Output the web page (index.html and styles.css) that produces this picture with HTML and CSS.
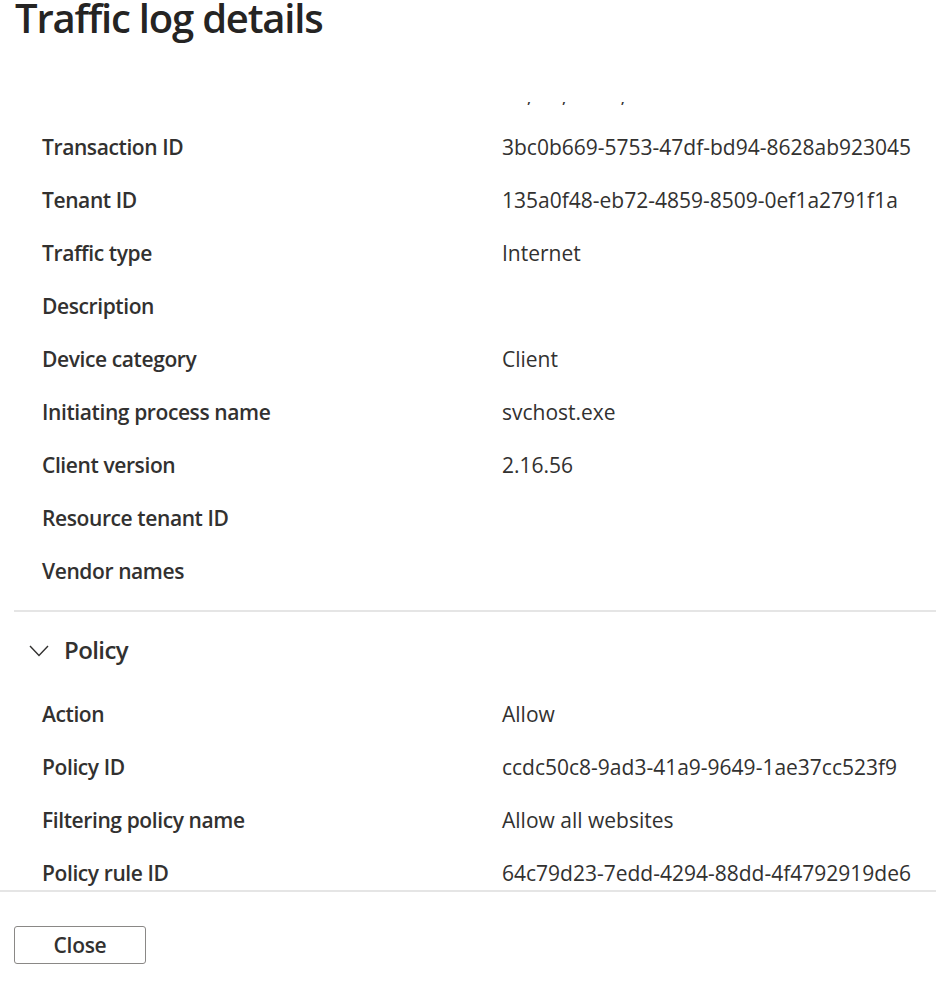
FILE: index.html
```html
<!DOCTYPE html>
<html lang="en">
<head>
<meta charset="utf-8">
<title>Traffic log details</title>
<link rel="stylesheet" href="styles.css">
</head>
<body>
<div class="panel">
  <header class="header">
    <h1 class="title">Traffic log details</h1>
  </header>
  <div class="scroll">
    <div class="scroll-inner">
      <div class="section">
        <div class="row"><div class="label">Date</div><div class="value">Fri, 10, 2024, 10:21:36 AM</div></div>
        <div class="row"><div class="label">Transaction ID</div><div class="value">3bc0b669-5753-47df-bd94-8628ab923045</div></div>
        <div class="row"><div class="label">Tenant ID</div><div class="value">135a0f48-eb72-4859-8509-0ef1a2791f1a</div></div>
        <div class="row"><div class="label">Traffic type</div><div class="value">Internet</div></div>
        <div class="row"><div class="label">Description</div><div class="value"></div></div>
        <div class="row"><div class="label">Device category</div><div class="value">Client</div></div>
        <div class="row"><div class="label">Initiating process name</div><div class="value">svchost.exe</div></div>
        <div class="row"><div class="label">Client version</div><div class="value">2.16.56</div></div>
        <div class="row"><div class="label">Resource tenant ID</div><div class="value"></div></div>
        <div class="row"><div class="label">Vendor names</div><div class="value"></div></div>
      </div>
      <div class="section section-divided">
        <div class="section-head">
          <svg class="chevron" width="20" height="12" viewBox="0 0 20 12" aria-hidden="true">
            <polyline points="1,1 10,10.5 19,1" fill="none" stroke="#323130" stroke-width="1.4"/>
          </svg>
          <span class="section-title">Policy</span>
        </div>
        <div class="row"><div class="label">Action</div><div class="value">Allow</div></div>
        <div class="row"><div class="label">Policy ID</div><div class="value">ccdc50c8-9ad3-41a9-9649-1ae37cc523f9</div></div>
        <div class="row"><div class="label">Filtering policy name</div><div class="value">Allow all websites</div></div>
        <div class="row"><div class="label">Policy rule ID</div><div class="value">64c79d23-7edd-4294-88dd-4f4792919de6</div></div>
      </div>
    </div>
  </div>
  <footer class="footer">
    <button class="btn" type="button">Close</button>
  </footer>
</div>
</body>
</html>
```
FILE: styles.css
```css
html, body {
  margin: 0;
  padding: 0;
  background: #ffffff;
}
body {
  font-family: "Open Sans", "Noto Sans", sans-serif;
  color: #323130;
  width: 936px;
  height: 986px;
  overflow: hidden;
}
.panel {
  display: flex;
  flex-direction: column;
}
.header {
  height: 102px;
  padding-left: 15px;
}
.title {
  margin: 0;
  font-size: 40px;
  line-height: 36px;
  font-weight: 600;
  letter-spacing: -1.2px;
  color: #252423;
}
.scroll {
  height: 788px;
  overflow: hidden;
  border-bottom: 2px solid #e5e5e5;
}
.scroll-inner {
  margin-top: -34px;
  padding-left: 14px;
}
.row {
  display: grid;
  grid-template-columns: 460px 1fr;
  height: 53px;
  line-height: 53px;
  font-size: 21px;
  padding-left: 28px;
  white-space: nowrap;
}
.label {
  font-weight: 600;
  letter-spacing: -0.4px;
}
.value {
  font-weight: 400;
}
.section-divided {
  border-top: 2px solid #e5e5e5;
  margin-top: 12px;
}
.section-head {
  display: flex;
  align-items: center;
  height: 76px;
  padding-left: 15px;
  gap: 15px;
}
.chevron {
  display: block;
  margin-top: 2px;
}
.section-title {
  font-size: 24px;
  font-weight: 600;
  line-height: 30px;
  letter-spacing: -0.6px;
}
.footer {
  padding: 34px 0 0 14px;
}
.btn {
  width: 132px;
  height: 38px;
  border: 1px solid #8a8886;
  border-radius: 3px;
  background: #ffffff;
  font-family: "Open Sans", "Noto Sans", sans-serif;
  font-size: 21px;
  font-weight: 600;
  letter-spacing: -0.3px;
  color: #323130;
  padding: 0;
  line-height: 1;
}
```
